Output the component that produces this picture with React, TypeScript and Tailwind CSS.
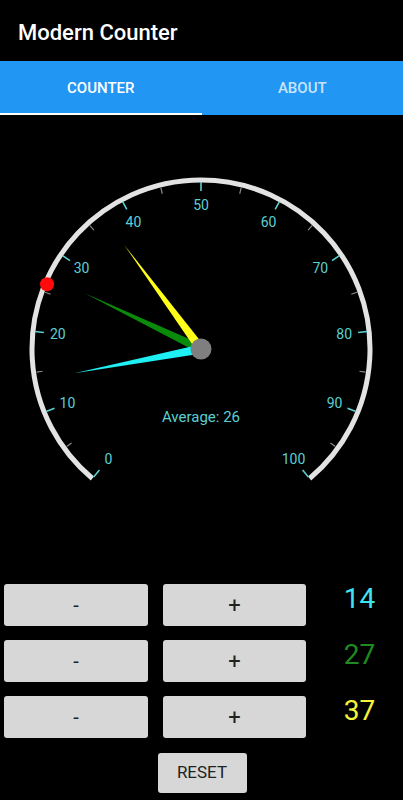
import { useState } from 'react';

const CX = 201;
const CY = 234;

const polar = (v: number, r: number) => {
    const a = ((-140 + 2.8 * v) * Math.PI) / 180;
    return { x: CX + r * Math.sin(a), y: CY - r * Math.cos(a) };
};

const Needle = ({ value, color }: { value: number; color: string }) => {
    const a = ((-140 + 2.8 * value) * Math.PI) / 180;
    const tip = polar(value, 129);
    const px = Math.cos(a) * 4.5;
    const py = Math.sin(a) * 4.5;
    const pts = `${tip.x},${tip.y} ${CX + px},${CY + py} ${CX - px},${CY - py}`;
    return <polygon points={pts} fill={color} />;
};

const Gauge = ({ values }: { values: number[] }) => {
    const avg = Math.round(values.reduce((s, v) => s + v, 0) / values.length);
    const start = polar(0, 169);
    const end = polar(100, 169);
    const dot = polar(avg, 167);
    const majors = Array.from({ length: 11 }, (_, i) => i * 10);
    const minors = Array.from({ length: 10 }, (_, i) => i * 10 + 5);

    return (
        <svg width="403" height="455" className="block">
            <path
                d={`M ${start.x} ${start.y} A 169 169 0 1 1 ${end.x} ${end.y}`}
                fill="none"
                stroke="#e3e3e3"
                strokeWidth="5"
            />
            {minors.map((v) => {
                const p1 = polar(v, 166);
                const p2 = polar(v, 160);
                return <line key={v} x1={p1.x} y1={p1.y} x2={p2.x} y2={p2.y} stroke="#8a8a8a" strokeWidth="1.2" />;
            })}
            {majors.map((v) => {
                const p1 = polar(v, 167);
                const p2 = polar(v, 158);
                const t = polar(v, 144);
                return (
                    <g key={v}>
                        <line x1={p1.x} y1={p1.y} x2={p2.x} y2={p2.y} stroke="#5ccfd2" strokeWidth="1.6" />
                        <text
                            x={t.x}
                            y={t.y}
                            fill="#5ccfd2"
                            fontSize="14"
                            textAnchor="middle"
                            dominantBaseline="central"
                            fontFamily="Roboto, sans-serif"
                        >
                            {v}
                        </text>
                    </g>
                );
            })}
            <text
                x={CX}
                y={302}
                fill="#5ccfd2"
                fontSize="15"
                textAnchor="middle"
                dominantBaseline="central"
                fontFamily="Roboto, sans-serif"
            >
                Average: {avg}
            </text>
            <Needle value={values[1]} color="#0a8a0a" />
            <Needle value={values[2]} color="#ffff1a" />
            <Needle value={values[0]} color="#1ef0f4" />
            <circle cx={CX} cy={CY} r="10.5" fill="#7f7f7f" />
            <circle cx={dot.x} cy={dot.y} r="7" fill="#ff0a0a" />
        </svg>
    );
};

const COLORS = ['text-[#3ee3ef]', 'text-[#1f8a1f]', 'text-[#f4f43a]'];

export default function App() {
    const [values, setValues] = useState([14, 27, 37]);
    const change = (i: number, d: number) =>
        setValues((vs) => vs.map((v, j) => (j === i ? Math.max(0, Math.min(100, v + d)) : v)));

    return (
        <div className="w-[403px] h-[800px] bg-black overflow-hidden font-['Roboto',sans-serif]">
            <div className="h-[61px] flex items-center pl-[18px] pt-[3px]">
                <h1 className="text-white text-[22px] font-medium">Modern Counter</h1>
            </div>
            <div className="h-[54px] bg-[#2196f3] flex">
                <div className="flex-1 flex flex-col">
                    <div className="flex-1 flex items-center justify-center pt-[3px] text-white text-[15px] font-medium">
                        COUNTER
                    </div>
                    <div className="h-[2px] bg-white" />
                </div>
                <div className="flex-1 flex items-center justify-center pt-[1px] text-[#c9e4fc] text-[15px] font-medium">
                    ABOUT
                </div>
            </div>
            <Gauge values={values} />
            <div className="pt-[14px] flex flex-col gap-[14px]">
                {values.map((v, i) => (
                    <div key={i} className="flex items-start pl-[4px]">
                        <button
                            onClick={() => change(i, -1)}
                            className="w-[144px] h-[42px] bg-[#d7d7d7] rounded-[3px] text-[#222] text-[20px]"
                        >
                            -
                        </button>
                        <button
                            onClick={() => change(i, 1)}
                            className="ml-[15px] w-[143px] h-[42px] bg-[#d7d7d7] rounded-[3px] text-[#222] text-[22px]"
                        >
                            +
                        </button>
                        <div className={`flex-1 pl-[10px] text-center text-[28px] leading-[28px] pt-[1px] ${COLORS[i]}`}>
                            {v}
                        </div>
                    </div>
                ))}
            </div>
            <div className="flex justify-center pt-[15px]">
                <button
                    onClick={() => setValues([0, 0, 0])}
                    className="ml-[1px] w-[89px] h-[40px] bg-[#d7d7d7] rounded-[3px] text-[#222] text-[17px]"
                >
                    RESET
                </button>
            </div>
        </div>
    );
}
